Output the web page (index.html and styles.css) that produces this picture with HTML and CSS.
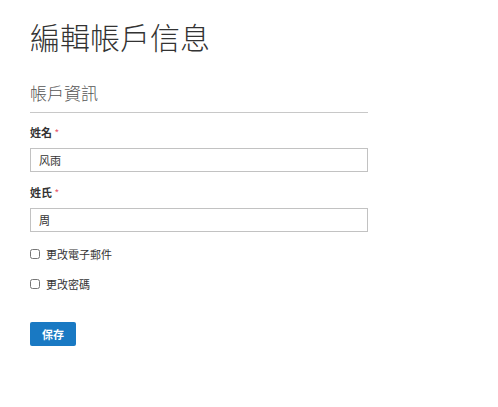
FILE: index.html
```html
<!DOCTYPE html>
<html lang="zh-Hant">
<head>
    <meta charset="UTF-8">
    <meta name="viewport" content="width=device-width, initial-scale=1.0">
    <title>編輯帳戶信息</title>
    <link rel="stylesheet" href="styles.css">
</head>
<body>
    <div class="account">
        <h1>編輯帳戶信息</h1>
        <form class="account-form">
            <h2 class="section-title">帳戶資訊</h2>

            <div class="field">
                <label for="firstName">姓名 <span class="req">*</span></label>
                <input type="text" id="firstName" value="风雨">
            </div>
            <div class="field">
                <label for="lastName">姓氏 <span class="req">*</span></label>
                <input type="text" id="lastName" value="周">
            </div>

            <div class="check">
                <input type="checkbox" id="changeEmail">
                <label for="changeEmail">更改電子郵件</label>
            </div>
            <div class="check">
                <input type="checkbox" id="changePass">
                <label for="changePass">更改密碼</label>
            </div>

            <div class="actions">
                <button type="button" class="btn-save">保存</button>
            </div>
        </form>
    </div>
</body>
</html>
```

FILE: styles.css
```css
body{
    margin: 0;
    padding: 0;
    background: #fff;
    color: #333;
    font-family: "Noto Sans CJK TC", "Noto Sans", sans-serif;
}
.account{
    width: 338px;
    padding: 18px 30px 40px;
}
.account h1{
    margin: 0;
    font-size: 30px;
    line-height: 36px;
    font-weight: 300;
    color: #333;
}
.section-title{
    margin: 27px 0 0;
    padding-bottom: 7px;
    font-size: 17px;
    line-height: 24px;
    font-weight: 300;
    color: #555;
    border-bottom: 1px solid #c8c8c8;
}
.field{
    margin-top: 11px;
}
.field + .field{
    margin-top: 12px;
}
.field label{
    display: block;
    font-size: 11px;
    line-height: 16px;
    font-weight: bold;
    color: #333;
    margin-bottom: 5px;
}
.req{
    color: #e8566a;
    font-size: 10px;
    font-weight: normal;
}
.field input{
    box-sizing: border-box;
    width: 100%;
    height: 24px;
    margin: 0;
    padding: 0 8px;
    border: 1px solid #c2c2c2;
    font-family: inherit;
    font-size: 11px;
    color: #333;
}
.check{
    display: flex;
    align-items: center;
    gap: 6px;
    margin-top: 14px;
    font-size: 11px;
    color: #333;
}
.check + .check{
    margin-top: 14px;
}
.check input{
    margin: 0;
    width: 10px;
    height: 10px;
}
.actions{
    margin-top: 28px;
}
.btn-save{
    height: 24px;
    padding: 0 12px;
    border: 0;
    border-radius: 2px;
    background: #1979c3;
    color: #fff;
    font-family: inherit;
    font-size: 11px;
    font-weight: bold;
}
```
